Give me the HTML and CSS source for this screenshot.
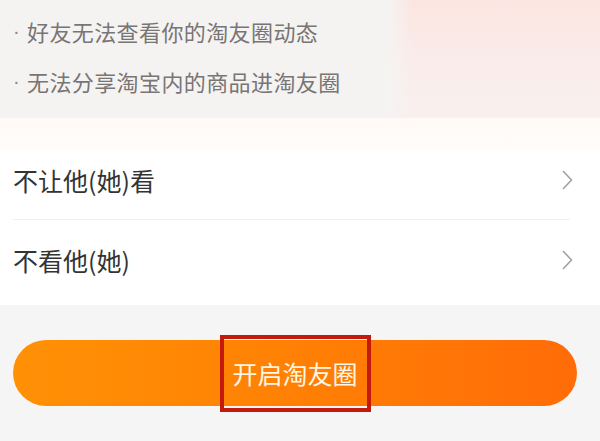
FILE: index.html
```html
<!DOCTYPE html>
<html lang="zh-CN">
<head>
<meta charset="utf-8">
<title>淘友圈</title>
<link rel="stylesheet" href="styles.css">
</head>
<body>
<div class="page">
  <section class="notice">
    <p class="notice-line"><span class="dot">·</span><span class="notice-text">好友无法查看你的淘友圈动态</span></p>
    <p class="notice-line"><span class="dot">·</span><span class="notice-text">无法分享淘宝内的商品进淘友圈</span></p>
  </section>
  <section class="card">
    <div class="row row-first">
      <span class="row-label">不让他(她)看</span>
      <svg class="chev" width="11" height="20" viewBox="0 0 11 20"><path d="M1.5 1.5 L9.5 10 L1.5 18.5" fill="none" stroke="#a0a0a0" stroke-width="1.6" stroke-linecap="round" stroke-linejoin="round"/></svg>
    </div>
    <div class="divider"></div>
    <div class="row row-second">
      <span class="row-label">不看他(她)</span>
      <svg class="chev" width="11" height="20" viewBox="0 0 11 20"><path d="M1.5 1.5 L9.5 10 L1.5 18.5" fill="none" stroke="#a0a0a0" stroke-width="1.6" stroke-linecap="round" stroke-linejoin="round"/></svg>
    </div>
  </section>
  <section class="action">
    <div class="btn">
      <span class="highlight">开启淘友圈</span>
    </div>
  </section>
</div>
</body>
</html>
```

FILE: styles.css
```css
html, body {
  margin: 0;
  padding: 0;
}
body {
  width: 600px;
  height: 441px;
  overflow: hidden;
  background: #f5f5f5;
  font-family: "Noto Sans CJK SC", "Noto Sans", sans-serif;
}
.page {
  display: flex;
  flex-direction: column;
}
.notice {
  height: 118px;
  box-sizing: border-box;
  padding: 6px 0 12px 13px;
  background:
    linear-gradient(90deg, #f5f3f2 0px, rgba(245, 243, 242, 0) 24px) 388px 0 / 24px 100% no-repeat,
    linear-gradient(180deg, #fce5e1 0%, #faebe8 40%, #f8f0ef 100%) right top / 212px 100% no-repeat,
    #f5f3f2;
}
.notice-line {
  margin: 0;
  height: 50px;
  display: flex;
  align-items: center;
  font-size: 22px;
  color: #787575;
}
.dot {
  display: inline-block;
  width: 14px;
  flex: none;
  font-family: "Liberation Sans", sans-serif;
  font-size: 20px;
  line-height: 1;
  color: #8a8888;
}
.notice-text {
  letter-spacing: 0.4px;
  line-height: 1;
}
.card {
  background: linear-gradient(180deg, #fffaf6 0px, #fffcfa 26px, #ffffff 36px);
  padding: 23px 0 5px 0;
}
.row {
  display: flex;
  align-items: center;
  justify-content: space-between;
  padding: 0 27px 0 13px;
}
.row-first {
  height: 78px;
}
.row-second {
  height: 80px;
}
.row-label {
  font-size: 25px;
  color: #333333;
}
.chev {
  display: block;
}
.divider {
  height: 1px;
  margin: 0 30px 0 13px;
  background: #f0f0f0;
}
.action {
  padding-top: 35px;
}
.btn {
  margin: 0 23px 0 13px;
  height: 66px;
  border-radius: 33px;
  background: linear-gradient(90deg, #ff9106 0%, #ff8204 45%, #ff6c08 100%);
  display: flex;
  align-items: center;
  justify-content: center;
}
.highlight {
  box-sizing: border-box;
  height: 77px;
  width: 151px;
  border: 4px solid #c41a0e;
  display: flex;
  align-items: center;
  justify-content: center;
  font-size: 25px;
  color: #fff6e4;
}
```
